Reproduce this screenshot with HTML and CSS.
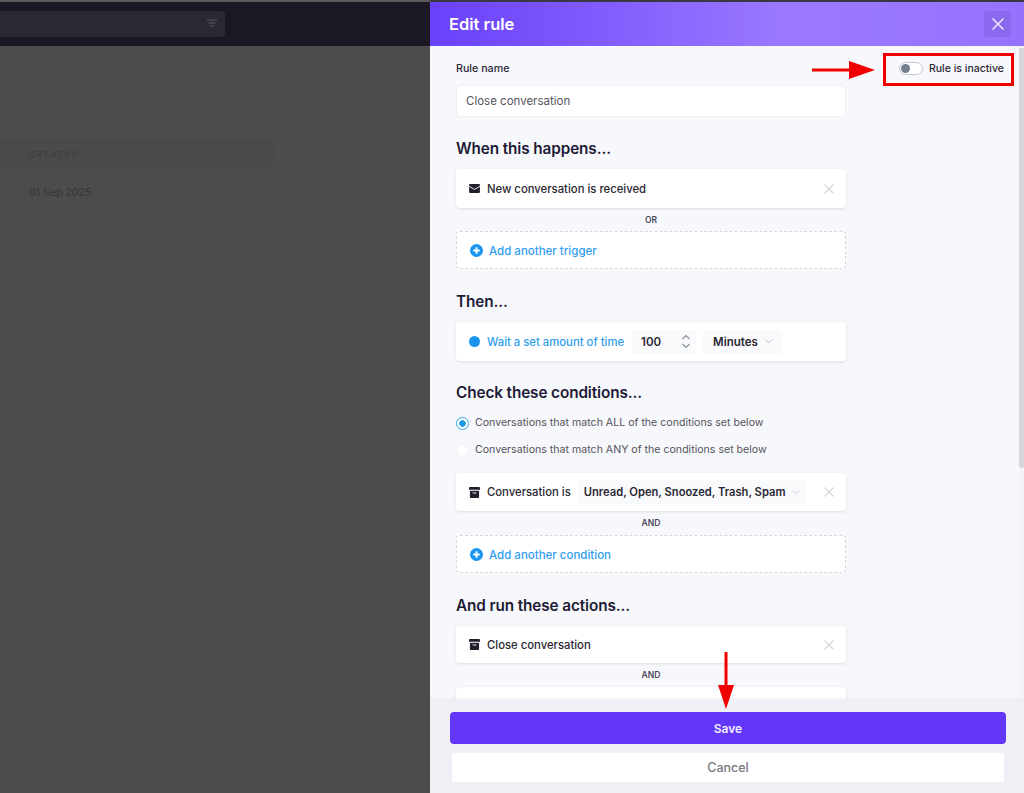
FILE: index.html
```html
<!DOCTYPE html>
<html lang="en">
<head>
<meta charset="utf-8">
<title>Edit rule</title>
<link rel="stylesheet" href="styles.css">
</head>
<body>
<div class="app">
  <div class="backdrop">
    <div class="topbar"><div class="search"><svg class="filter" viewBox="0 0 12 10" width="12" height="10"><path d="M1 1h10M2.500 4h7M4 7h4M5.500 9.500h1" stroke="#4a4852" stroke-width="1.300" fill="none"/></svg></div></div>
    <div class="table">
      <div class="thead">CREATED</div>
      <div class="trow">01 Sep 2025</div>
    </div>
  </div>
  <aside class="panel">
    <header class="phead">
      <h1>Edit rule</h1>
      <button class="close" aria-label="Close"><svg viewBox="0 0 14 14" width="14" height="14"><path d="M1.500 1.500l11 11M12.500 1.500l-11 11" stroke="#fff" stroke-width="1.500" fill="none" opacity=".85"/></svg></button>
    </header>
    <div class="scroll">
      <div class="form">
        <div class="name-row">
          <div class="name-col">
            <label class="label">Rule name</label>
            <div class="input">Close conversation</div>
          </div>
          <div class="status">
            <span class="toggle"><span class="knob"></span></span>
            <span>Rule is inactive</span>
          </div>
        </div>

        <h2 class="first">When this happens...</h2>
        <div class="card c39">
          <svg class="ico" viewBox="0 0 12 10" width="11" height="9"><rect width="12" height="10" rx="1" fill="#23202c"/><path d="M0 2.500l6 3.500 6-3.500" stroke="#fff" stroke-width="1" fill="none"/></svg>
          <span class="ctext">New conversation is received</span>
          <svg class="x" viewBox="0 0 10 10" width="10" height="10"><path d="M.5.500l9 9M9.500.500l-9 9" stroke="#d3d5da" stroke-width="1.200" fill="none"/></svg>
        </div>
        <div class="sep">OR</div>
        <div class="dashed">
          <svg class="plus" viewBox="0 0 14 14" width="13" height="13"><circle cx="7" cy="7" r="7" fill="#1a96f0"/><path d="M3.500 7h7M7 3.500v7" stroke="#fff" stroke-width="2"/></svg>
          <span>Add another trigger</span>
        </div>

        <h2 class="after-dashed">Then...</h2>
        <div class="card c39 wait">
          <svg class="ico" viewBox="0 0 12 12" width="11" height="11"><circle cx="6" cy="6" r="6" fill="#1a96f0"/><path d="M6 3v3.200h2.500" stroke="#1583d6" stroke-width="1" fill="none"/></svg>
          <span class="link">Wait a set amount of time</span>
          <span class="num"><span>100</span><svg viewBox="0 0 10 15" width="10" height="15"><path d="M1.500 5l3.500-3.500 3.500 3.500M1.500 10l3.500 3.500 3.500-3.500" stroke="#8d9099" stroke-width="1.200" fill="none"/></svg></span>
          <span class="sel"><span>Minutes</span><svg viewBox="0 0 8 5" width="8" height="5"><path d="M.5.500l3.500 3.500 3.500-3.500" stroke="#c4c7cd" stroke-width="1" fill="none"/></svg></span>
        </div>

        <h2 class="before-radio">Check these conditions...</h2>
        <div class="radio"><span class="dot on"></span>Conversations that match ALL of the conditions set below</div>
        <div class="radio"><span class="dot"></span>Conversations that match ANY of the conditions set below</div>
        <div class="card c38 cond">
          <svg class="ico" viewBox="0 0 12 12" width="11" height="11"><path d="M1 0h10a1 1 0 0 1 1 1v2H0V1a1 1 0 0 1 1-1zM1 4h10v7a1 1 0 0 1-1 1H2a1 1 0 0 1-1-1z" fill="#23202c"/><path d="M4 6.500h4" stroke="#fff" stroke-width="1"/></svg>
          <span class="ctext">Conversation is</span>
          <span class="sel wide"><span>Unread, Open, Snoozed, Trash, Spam</span><svg viewBox="0 0 8 5" width="8" height="5"><path d="M.5.500l3.500 3.500 3.500-3.500" stroke="#c4c7cd" stroke-width="1" fill="none"/></svg></span>
          <svg class="x" viewBox="0 0 10 10" width="10" height="10"><path d="M.5.500l9 9M9.500.500l-9 9" stroke="#d3d5da" stroke-width="1.200" fill="none"/></svg>
        </div>
        <div class="sep sep-and">AND</div>
        <div class="dashed">
          <svg class="plus" viewBox="0 0 14 14" width="13" height="13"><circle cx="7" cy="7" r="7" fill="#1a96f0"/><path d="M3.500 7h7M7 3.500v7" stroke="#fff" stroke-width="2"/></svg>
          <span>Add another condition</span>
        </div>

        <h2 class="after-dashed">And run these actions...</h2>
        <div class="card c37">
          <svg class="ico" viewBox="0 0 12 12" width="11" height="11"><path d="M1 0h10a1 1 0 0 1 1 1v2H0V1a1 1 0 0 1 1-1zM1 4h10v7a1 1 0 0 1-1 1H2a1 1 0 0 1-1-1z" fill="#23202c"/><path d="M4 6.500h4" stroke="#fff" stroke-width="1"/></svg>
          <span class="ctext">Close conversation</span>
          <svg class="x" viewBox="0 0 10 10" width="10" height="10"><path d="M.5.500l9 9M9.500.500l-9 9" stroke="#d3d5da" stroke-width="1.200" fill="none"/></svg>
        </div>
        <div class="sep sep-and">AND</div>
        <div class="card c37"></div>
      </div>
      <div class="scrollbar"><div class="thumb"></div></div>
    </div>
    <footer class="pfoot">
      <button class="save">Save</button>
      <button class="cancel">Cancel</button>
    </footer>
  </aside>
</div>

<div class="mark-box"></div>
<svg class="arrow-right" viewBox="0 0 64 20" width="64" height="20"><path d="M0 8.500h38v3H0z" fill="#f00000"/><path d="M37 1l26 9-26 9z" fill="#f00000"/></svg>
<svg class="arrow-down" viewBox="0 0 16 57" width="16" height="57"><path d="M6.500 0h3v36h-3z" fill="#f00000"/><path d="M0 33h16l-8 24z" fill="#f00000"/></svg>
</body>
</html>
```
FILE: styles.css
```css
* { box-sizing: border-box; }
html, body { margin: 0; height: 793px; overflow: hidden; }
body { font-family: Inter, "Liberation Sans", sans-serif; color: #23202c; position: relative; }
.app { display: flex; height: 793px; }

.backdrop { width: 430px; background: #4c4c4c; border-top: 2px solid #5a5a5c; flex: none; }
.topbar { height: 44px; background: #1b1723; padding-top: 9px; }
.search { width: 225px; height: 26px; background: #2a2832; border-radius: 0 4px 4px 0; display: flex; justify-content: flex-end; align-items: center; padding-right: 7px; }
.table { width: 275px; margin-top: 94px; }
.thead { height: 27px; background: #4a4a4a; border-top: 1px solid #474747; padding-left: 29px; font-size: 8px; letter-spacing: 2px; line-height: 26px; color: #3c3c3e; font-weight: 500; }
.trow { height: 45px; padding-left: 29px; font-size: 10.600px; line-height: 52px; color: #363638; border-bottom: 1px solid #474747; }

.panel { width: 594px; flex: none; display: flex; flex-direction: column; background: #f7f8fb; border-top: 2px solid #3a3840; }
.phead { height: 44px; flex: none; background: linear-gradient(90deg, #6a41fb 0%, #9a79ff 60%, #9572fd 100%); display: flex; align-items: center; justify-content: space-between; padding: 0 13px 0 19px; }
.phead h1 { margin: 0; font-size: 16.500px; font-weight: 600; color: #fff; }
.close { width: 27px; height: 26px; background: #8b69ee; border: 0; border-radius: 3px; display: flex; align-items: center; justify-content: center; padding: 0; }

.scroll { flex: 1; min-height: 0; overflow: hidden; position: relative; }
.form { padding: 16px 0 0 26px; width: 588px; }
.name-row { display: flex; justify-content: space-between; align-items: flex-start; }
.name-col { width: 390px; }
.label { display: block; font-size: 10.700px; font-weight: 500; line-height: 13px; color: #2a2733; margin-bottom: 10px; }
.input { height: 32px; background: #fff; border: 1px solid #eff0f3; border-radius: 4px; padding-left: 9px; font-size: 11.500px; line-height: 30px; color: #55535c; }
.status { display: flex; align-items: center; gap: 6px; font-size: 10.500px; font-weight: 500; color: #2a2733; line-height: 13px; margin: 0 14px 0 0; }
.toggle { width: 24px; height: 13px; border: 1px solid #c5c9d0; border-radius: 7px; background: #fff; padding: 1px; display: block; }
.knob { display: block; width: 9px; height: 9px; border-radius: 50%; background: #75808f; }

h2 { margin: 22px 0 11px; font-size: 15.300px; line-height: 20px; font-weight: 600; color: #1e1a36; letter-spacing: -.1px; width: 390px; }
h2.first { margin: 22px 0 10px; }
h2.after-dashed { margin: 23px 0 10px; }
h2.before-radio { margin: 22px 0 13px; }

.card { width: 390px; background: #fff; border-radius: 4px; box-shadow: 0 1px 3px rgba(40, 44, 60, .13); display: flex; align-items: center; padding: 0 12px 0 13px; font-size: 11.300px; font-weight: 500; color: #2a2733; }
.c39 { height: 39px; }
.c38 { height: 38px; }
.c37 { height: 37px; }
.ico { flex: none; margin-right: 7px; }
.ctext { flex: none; }
.x { margin-left: auto; flex: none; }
.sep { width: 390px; height: 23px; text-align: center; font-size: 8.500px; font-weight: 600; line-height: 25px; color: #4b4860; }
.sep-and { height: 24px; }
.dashed { width: 390px; height: 38px; border: 1px dashed #d6d8de; border-radius: 4px; background: #fff; display: flex; align-items: center; padding: 1px 0 0 13px; gap: 6px; font-size: 11.500px; font-weight: 500; color: #2f9ef0; }
.plus { flex: none; }
.link { color: #2f9ef0; }
.num { width: 64px; height: 24px; background: #f9fafb; border-radius: 3px; margin-left: 8px; display: flex; align-items: center; justify-content: space-between; padding: 0 5px 0 9px; font-weight: 600; font-size: 11.500px; }
.sel { height: 24px; background: #f9fafb; border-radius: 3px; margin-left: 7px; display: flex; align-items: center; gap: 7px; padding: 0 10px; width: 80px; font-weight: 600; font-size: 11.500px; }
.wide { width: 228px; margin-left: 7px; padding: 0 6px; white-space: nowrap; font-size: 11.200px; }

.radio { width: 390px; display: flex; align-items: center; gap: 6px; font-size: 10.600px; line-height: 14px; color: #55535c; margin-bottom: 13px; }
.radio + .radio { margin-bottom: 0; }
.dot { width: 13px; height: 13px; border-radius: 50%; background: #fff; flex: none; border: 1px solid #f0f1f4; }
.dot.on { border: 1px solid #2fa8e8; background: radial-gradient(circle, #1e9be6 0 3px, #fff 3.500px); }
.cond { margin-top: 16px; }

.scrollbar { position: absolute; right: 0; top: 0; bottom: 0; width: 5px; background: #f3f4f7; }
.thumb { height: 420px; margin-top: 2px; background: #d6d7da; border-radius: 0 0 2px 2px; }

.pfoot { height: 94px; flex: none; background: #eef0f5; padding: 13px 18px 0 20px; display: flex; flex-direction: column; gap: 8px; box-shadow: 0 -1px 2px rgba(40, 44, 60, .05); position: relative; }
.save { height: 32px; border: 0; border-radius: 4px; background: #6237fb; color: #f3efff; font: 600 12px Inter, "Liberation Sans", sans-serif; }
.cancel { height: 31px; margin: 0 1px; border: 1px solid #f0f1f4; border-radius: 3px; background: #fff; color: #75787f; font: 500 12.500px Inter, "Liberation Sans", sans-serif; }

.mark-box { position: absolute; left: 883px; top: 53px; width: 131px; height: 33px; border: 3px solid #f00000; }
.arrow-right { position: absolute; left: 812px; top: 60px; }
.arrow-down { position: absolute; left: 718px; top: 652px; }
```
